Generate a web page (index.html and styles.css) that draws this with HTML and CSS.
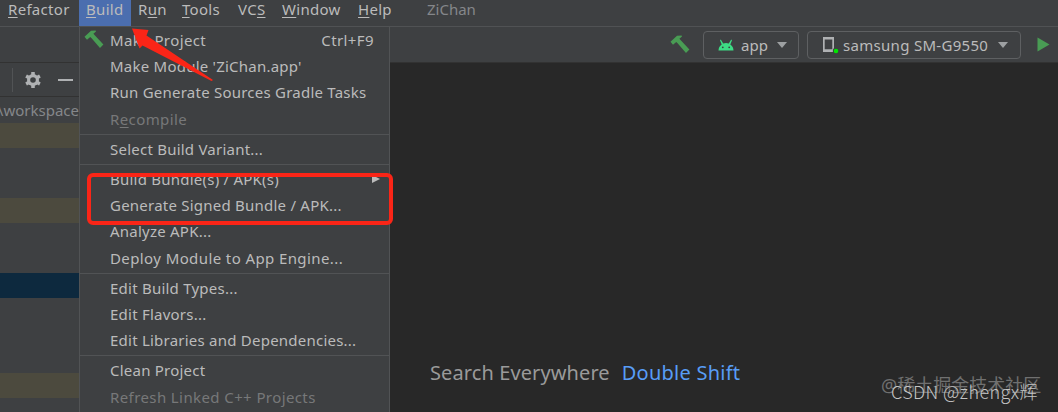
FILE: index.html
```
<!DOCTYPE html>
<html lang="en">
<head>
  <meta charset="UTF-8" />
  <title>ZiChan</title>
  <link rel="stylesheet" href="styles.css">
</head>
<body>
  <nav class="menubar">
    <a class="refactor"><u>R</u>efactor</a>
    <a class="build active"><u>B</u>uild</a>
    <a class="run">R<u>u</u>n</a>
    <a class="tools"><u>T</u>ools</a>
    <a class="vcs">VC<u>S</u></a>
    <a class="window"><u>W</u>indow</a>
    <a class="help"><u>H</u>elp</a>
    <span class="title">ZiChan</span>
  </nav>

  <div class="toolbar">
    <svg class="hammer" width="20" height="20" viewBox="0 0 20 20">
      <path d="M.5 6.8 7 .8 11.6.6 12 1.6 9.4 3.8 11 5.6 19.4 14.6 16 18 7.6 8.2 6.2 7 3 9.8z" fill="#499c54"/>
    </svg>
    <div class="combo app">
      <svg width="16" height="12" viewBox="0 0 16 12">
        <path d="M.5 11.5a7.5 7.5 0 0 1 3.2-6L2 1.2l.8-.7 2.4 4a7.5 7.5 0 0 1 5.6 0l2.4-4 .8.7-1.7 4.3a7.5 7.5 0 0 1 3.2 6z" fill="#3ddc84"/>
        <circle cx="4.8" cy="8.3" r=".9" fill="#3c3f41"/>
        <circle cx="11.2" cy="8.3" r=".9" fill="#3c3f41"/>
      </svg>
      <span>app</span>
      <i class="caret"></i>
    </div>
    <div class="combo device">
      <svg width="17" height="18" viewBox="0 0 17 18">
        <path d="M1 1h11v15H1zM2.7 3.5v9.8h7.6V3.5z" fill="#afb1b3" fill-rule="evenodd"/>
        <circle cx="14" cy="15" r="3.2" fill="#3c3f41"/>
        <circle cx="14" cy="15" r="2.3" fill="#00e600"/>
      </svg>
      <span>samsung SM-G9550</span>
      <i class="caret"></i>
    </div>
    <svg class="play" width="13" height="15" viewBox="0 0 13 15">
      <path d="M.5.5 12.5 7.5.5 14.5z" fill="#499c54"/>
    </svg>
  </div>

  <main>
    <aside>
      <div class="panel-head">
        <svg width="16" height="16" viewBox="0 0 16 16">
          <g fill="#afb1b3">
            <rect x="6.2" y="0" width="3.6" height="16" rx=".5"/>
            <rect x="6.2" y="0" width="3.6" height="16" rx=".5" transform="rotate(60 8 8)"/>
            <rect x="6.2" y="0" width="3.6" height="16" rx=".5" transform="rotate(120 8 8)"/>
            <circle cx="8" cy="8" r="6"/>
          </g>
          <circle cx="8" cy="8" r="2.8" fill="#3c3f41"/>
        </svg>
        <span class="minus"></span>
      </div>
      <div class="tree">
        <div class="row path">\workspace</div>
        <div class="row marked"></div>
        <div class="row"></div>
        <div class="row"></div>
        <div class="row marked"></div>
        <div class="row"></div>
        <div class="row"></div>
        <div class="row selected"></div>
        <div class="row"></div>
        <div class="row"></div>
        <div class="row"></div>
        <div class="row marked"></div>
      </div>
    </aside>
    <div class="editor">
      <p class="hint"><span class="search">Search Everywhere</span><span class="key">Double Shift</span></p>
    </div>
  </main>

  <div class="menu">
    <div class="item">
      <svg class="hammer" width="20" height="20" viewBox="0 0 20 20">
        <path d="M.5 6.8 7 .8 11.6.6 12 1.6 9.4 3.8 11 5.6 19.4 14.6 16 18 7.6 8.2 6.2 7 3 9.8z" fill="#499c54"/>
      </svg>
      <span class="loose">Make Project</span><span class="shortcut loose">Ctrl+F9</span>
    </div>
    <div class="item"><span>Make Module 'ZiChan.app'</span></div>
    <div class="item"><span>Run Generate Sources Gradle Tasks</span></div>
    <div class="item disabled"><span class="loose">R<u>e</u>compile</span></div>
    <hr>
    <div class="item"><span>Select Build Variant...</span></div>
    <hr>
    <div class="item"><span>Build Bundle(s) / APK(s)</span><i class="submenu"></i></div>
    <div class="item"><span>Generate Signed Bundle / APK...</span></div>
    <div class="item"><span>Analyze APK...</span></div>
    <div class="item"><span class="loose">Deploy Module to App Engine...</span></div>
    <hr>
    <div class="item"><span>Edit Build Types...</span></div>
    <div class="item"><span>Edit Flavors...</span></div>
    <div class="item"><span>Edit Libraries and Dependencies...</span></div>
    <hr>
    <div class="item"><span>Clean Project</span></div>
    <div class="item disabled"><span class="loose">Refresh Linked C++ Projects</span></div>
  </div>

  <!-- annotations -->
  <div class="red-box"></div>
  <svg class="arrow" width="84" height="54" viewBox="0 0 84 54">
    <path d="M1 .5 17.5 2 15.5 7.5 82 52 80.5 53 11.5 17.5 8.5 20.5z" fill="#fa2517"/>
  </svg>
  <div class="watermark juejin">@稀土掘金技术社区</div>
  <div class="watermark csdn">CSDN @zhengx辉</div>
</body>
</html>
```
FILE: styles.css
```
* {
  box-sizing: border-box;
}

body {
  margin: 0;
  width: 1058px;
  height: 412px;
  overflow: hidden;
  position: relative;
  background: #3e4042;
  color: #bbbbbb;
  font-family: "Noto Sans", "Noto Sans CJK SC", sans-serif;
  font-size: 15px;
  display: flex;
  flex-direction: column;
}

u {
  text-decoration-thickness: 1px;
  text-underline-offset: 2px;
}

.menubar {
  display: flex;
  height: 27px;
  flex: none;
  border-bottom: 1px solid #505254;
  line-height: 18px;
  letter-spacing: 0.3px;
  padding-left: 1px;
}

.menubar a {
  padding: 0 7px;
}

.menubar .refactor {
  width: 78px;
}

.menubar .active {
  background: #4b6eaf;
  width: 52px;
}

.menubar .run { width: 44px; }
.menubar .tools { width: 56px; }
.menubar .vcs { width: 44px; }
.menubar .window { width: 76px; }
.menubar .help { width: 76px; }

.menubar .title {
  color: #85878a;
  letter-spacing: 0;
}

.toolbar {
  display: flex;
  align-items: center;
  height: 36px;
  flex: none;
  padding-left: 670px;
  border-bottom: 1px solid #323232;
}

.combo {
  display: flex;
  align-items: center;
  height: 28px;
  border: 1px solid #5e6062;
  border-radius: 4px;
}

.app {
  width: 96px;
  margin-left: 13px;
  padding-left: 14px;
}

.app span {
  margin: 0 9px 0 7px;
}

.device {
  width: 214px;
  margin-left: 8px;
  padding-left: 14px;
}

.device span {
  margin: 0 10px 0 4px;
  letter-spacing: 0.3px;
}

.caret {
  border: 5.5px solid transparent;
  border-top: 6px solid #9da0a2;
  border-bottom: 0;
}

.play {
  margin-left: 16px;
}

main {
  display: flex;
  flex: 1;
}

aside {
  width: 80px;
}

.panel-head {
  display: flex;
  align-items: center;
  height: 34px;
  padding-left: 25px;
  border-bottom: 1px solid #323232;
}

.panel-head::before {
  content: "";
  height: 24px;
  border-left: 1px solid #515355;
  margin: 0 12px 0 -13px;
}

.minus {
  width: 15px;
  height: 2px;
  margin-left: 17px;
  background: #afb1b3;
}

.row {
  height: 25px;
}

.path {
  height: 26px;
  line-height: 27px;
  color: #85878a;
  display: flex;
  justify-content: flex-end;
  padding-right: 1px;
}

.marked {
  background: #4c4a3e;
}

.selected {
  background: #0d293e;
}

.editor {
  flex: 1;
  background: #282828;
  padding: 295px 0 0 350px;
  margin-left: 310px;
  padding-left: 40px;
}

.hint {
  margin: 0;
  font-size: 20px;
  line-height: 30px;
  color: #9a9a9a;
  letter-spacing: 0.1px;
  white-space: nowrap;
}

.key {
  color: #589df6;
  margin-left: 12px;
  letter-spacing: 0.25px;
}

/* Build dropdown */
.menu {
  position: absolute;
  left: 79px;
  top: 27px;
  width: 311px;
  height: 390px;
  background: #3e4042;
  border: solid #515355;
  border-width: 0 1px;
  letter-spacing: 0.23px;
}

.item {
  display: flex;
  align-items: center;
  height: 26.2px;
  padding: 0 15px 0 30px;
  white-space: nowrap;
}

.item .hammer {
  margin: 0 6px 0 -26px;
}

.loose {
  letter-spacing: 0.4px;
}

.shortcut,
.submenu {
  margin-left: auto;
}

.submenu {
  border: 4px solid transparent;
  border-left: 8px solid #bbbbbb;
  border-right: 0;
  margin-right: -6px;
}

.disabled {
  color: #777879;
}

.menu hr {
  height: 4px;
  margin: 0;
  border: 0;
  background: linear-gradient(#515355, #515355) 0 2px / 100% 1px no-repeat;
}

.red-box {
  position: absolute;
  left: 87px;
  top: 173px;
  width: 306px;
  height: 52px;
  border: 4px solid #fa2517;
  border-radius: 6px;
}

.arrow {
  position: absolute;
  left: 131px;
  top: 28px;
}

.watermark {
  position: absolute;
  white-space: nowrap;
  line-height: 24px;
}

.juejin {
  left: 881px;
  top: 373px;
  font-size: 18px;
  color: #707070;
}

.csdn {
  left: 891px;
  top: 379px;
  font-family: "Noto Sans CJK SC", sans-serif;
  font-size: 18px;
  font-weight: 300;
  letter-spacing: 0.4px;
  color: #c4c4c4;
}
```
